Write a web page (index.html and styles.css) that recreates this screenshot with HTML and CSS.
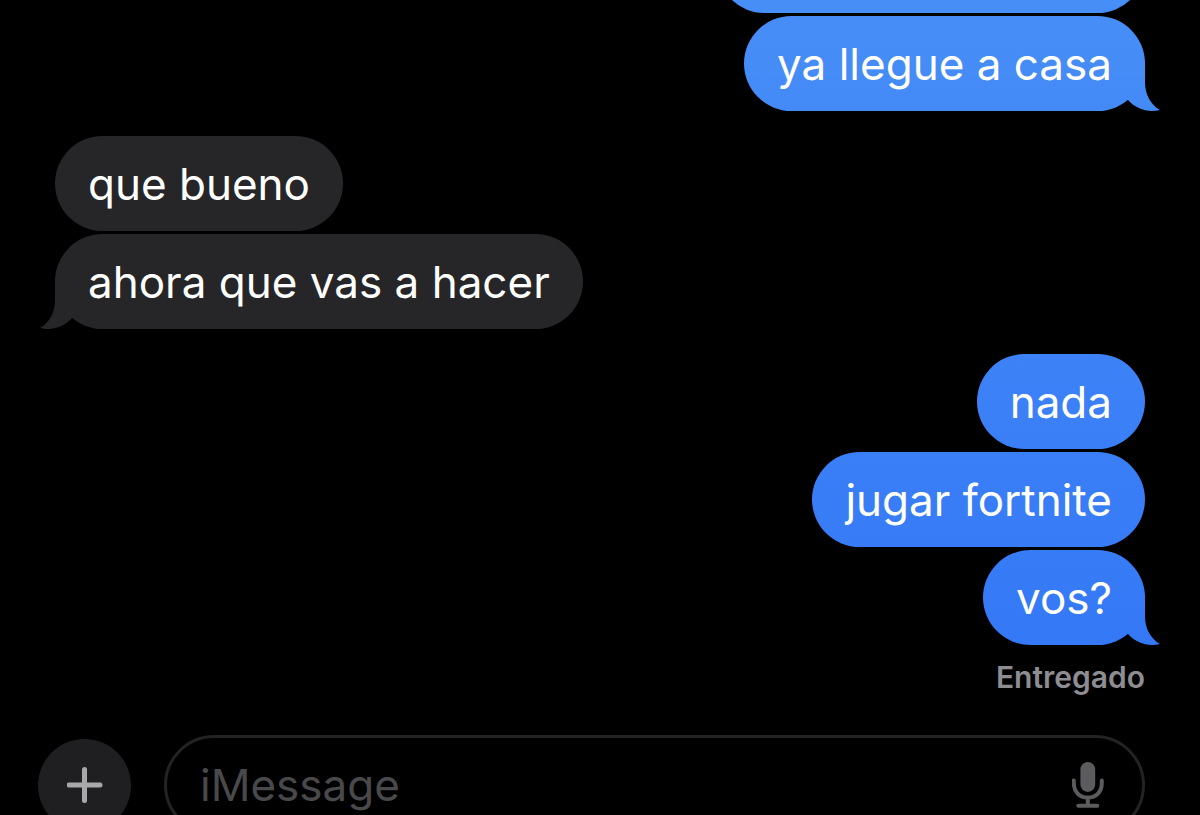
FILE: index.html
```html
<!DOCTYPE html>
<html lang="es">
<head>
    <meta charset="UTF-8">
    <meta name="viewport" content="width=device-width, initial-scale=1.0">
    <title>iMessage</title>
    <link rel="stylesheet" href="styles.css">
</head>
<body>
    <main class="thread">
        <div class="group sent">
            <div class="bubble scrolled"></div>
            <div class="bubble tail">ya llegue a casa</div>
        </div>
        <div class="group received">
            <div class="bubble">que bueno</div>
            <div class="bubble tail">ahora que vas a hacer</div>
        </div>
        <div class="group sent">
            <div class="bubble">nada</div>
            <div class="bubble">jugar fortnite</div>
            <div class="bubble tail">vos?</div>
        </div>
        <div class="status">Entregado</div>
    </main>
    <form class="composer">
        <button type="button" class="add" aria-label="Agregar">
            <svg width="36" height="36" viewBox="0 0 36 36">
                <path d="M17.5 2.5V33.5M2 18H33" fill="none" stroke="currentColor" stroke-width="5" stroke-linecap="round"/>
            </svg>
        </button>
        <div class="field">
            <input type="text" class="message" placeholder="iMessage" aria-label="iMessage">
            <button type="button" class="mic" aria-label="Dictar">
                <svg width="32" height="46" viewBox="0 0 32 46">
                    <rect x="8.4" y="0" width="14.8" height="30" rx="7.4" fill="currentColor"/>
                    <path d="M1.8 18.5V21C1.8 29.8 7.4 35.6 15.8 35.6S29.8 29.8 29.8 21V18.5M15.8 35.6V43.5M6.3 43.8H25.3" fill="none" stroke="currentColor" stroke-width="4" stroke-linecap="round"/>
                </svg>
            </button>
        </div>
    </form>
</body>
</html>
```

FILE: styles.css
```css
* {
    box-sizing: border-box;
}
html {
    background-color: #000;
    overflow: hidden;
}
/* the composer runs 20px past the bottom of the window */
body {
    display: flex;
    flex-direction: column;
    height: calc(100vh + 20px);
    margin: 0;
    font-family: Inter, "Liberation Sans", sans-serif;
    color: #fff;
}

/* messages */
.thread {
    flex: 1;
    min-height: 0;
    display: flex;
    flex-direction: column;
    justify-content: flex-end;
    gap: 25px;
    padding: 0 55px 42px;
    overflow: hidden;
}
.group {
    display: flex;
    flex-direction: column;
    gap: 3px;
}
.sent {
    align-items: flex-end;
}
.received {
    align-items: flex-start;
}
.bubble {
    position: relative;
    flex: none;
    height: 95px;
    padding: 0 33px;
    border-radius: 48px;
    font-size: 44px;
    line-height: 96px;
}
.sent .bubble, .sent .tail::after {
    background: linear-gradient(#478ef7, #3478f6 80%) fixed;
}
.received .bubble, .received .tail::after {
    background-color: #262628;
}
.scrolled {
    width: 428px;
}
.tail::after {
    content: "";
    position: absolute;
    right: -15px;
    bottom: 0;
    width: 40px;
    height: 50px;
    clip-path: path("M25 0V21C25 34 31 44 40 49C28 52 16 48 8 39V0Z");
}
.received .tail::after {
    right: auto;
    left: -15px;
    transform: scaleX(-1);
}
.status {
    margin-top: -9px;
    font-size: 30px;
    font-weight: 600;
    line-height: 32px;
    text-align: right;
    color: #8d8d92;
}

/* composer */
.composer {
    display: flex;
    align-items: center;
    gap: 33px;
    padding: 0 55px 0 38px;
}
button {
    display: flex;
    align-items: center;
    justify-content: center;
    padding: 0;
    border: 0;
    background: none;
}
.add {
    width: 93px;
    height: 93px;
    border-radius: 50%;
    background-color: #1f1f21;
    color: #a8a8aa;
}
.field {
    flex: 1;
    display: flex;
    align-items: center;
    height: 100px;
    padding: 0 38px 0 33px;
    border: 3px solid #232325;
    border-radius: 50px;
}
.message {
    flex: 1;
    min-width: 0;
    height: 94px;
    padding: 0;
    border: 0;
    outline: 0;
    background: none;
    font-family: inherit;
    font-size: 44px;
    color: #fff;
}
.message::placeholder {
    color: #49494b;
    opacity: 1;
}
.mic {
    color: #5c5c5e;
}
```
